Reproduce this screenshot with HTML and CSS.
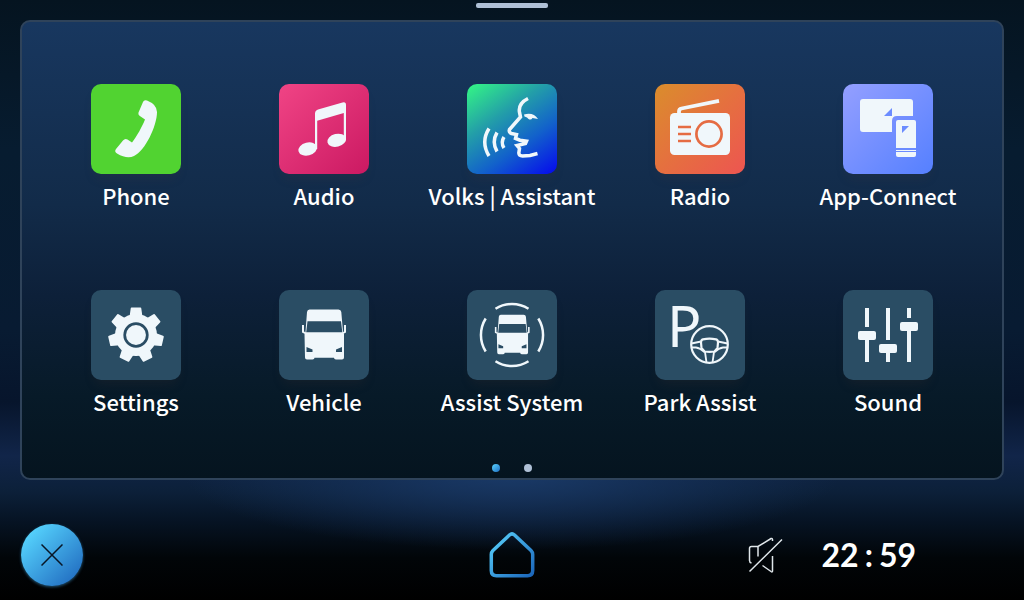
FILE: index.html
```html
<!DOCTYPE html>
<html lang="en">
<head>
    <meta charset="UTF-8">
    <meta name="viewport" content="width=device-width, initial-scale=1.0">
    <title>Home</title>
    <link rel="stylesheet" href="styles.css">
</head>
<body>
    <header class="topbar">
        <div class="handle"></div>
    </header>

    <main class="panel">
        <div class="apps">
            <button class="app" type="button">
                <svg class="tile tile-phone" viewBox="0 0 90 90" aria-hidden="true">
                    <path d="M52 18Q53 15.500 56 16.500Q66 20.500 66 28C66 42 54 67 43 72Q36 75.500 26 69.500Q23 67.500 25 65L32 56.500Q34 54 36.500 55.500L41 58.500C46 52 51 43 54 35.500L48.500 31.800Q46.800 30.500 47.500 28.500Z"/>
                </svg>
                <span class="label">Phone</span>
            </button>

            <button class="app" type="button">
                <svg class="tile tile-audio" viewBox="0 0 90 90" aria-hidden="true">
                    <path d="M36 65V29.500Q36 26.500 39 25.500L63.500 18.500Q67 17.500 67 21V56H64.800V29L38.200 36.800V65Z"/>
                    <ellipse cx="28.700" cy="65" rx="9.500" ry="6.500" transform="rotate(-14 28.700 65)"/>
                    <ellipse cx="57.700" cy="56.300" rx="9.500" ry="6.400" transform="rotate(-14 57.700 56.300)"/>
                </svg>
                <span class="label">Audio</span>
            </button>

            <button class="app" type="button">
                <svg class="tile tile-voice" viewBox="0 0 90 90" aria-hidden="true">
                    <g class="line" stroke-width="3.500">
                        <path d="M61 14.500C54 18 51.500 23 52.500 28.500L53.500 33L42.500 45.500Q41.500 48.500 44.500 49.500L49.500 50.500L48.500 54.500L53 56.200L59.500 57.200L58.500 59.500L50 61.500L52.500 64.500L51.800 69Q52 72 55.500 72L63 71.500L70.500 69.500"/>
                        <path d="M22 44.500Q13.500 58 22 72M30 48.500Q24.500 58 30 67.500M37 53Q33.500 58.500 37 64"/>
                    </g>
                    <path d="M57 30.500Q66.500 28 71 35L65.500 34Q64 36.500 61.500 35Q60.500 33 57.500 32.500Z"/>
                </svg>
                <span class="label">Volks | Assistant</span>
            </button>

            <button class="app" type="button">
                <svg class="tile tile-radio" viewBox="0 0 90 90" aria-hidden="true">
                    <rect x="15" y="29" width="60" height="42" rx="4.500"/>
                    <path class="line" stroke-width="3.800" d="M24 30V27.500Q24 25 26.500 24.500L64 16.800"/>
                    <g class="radio-detail">
                        <circle cx="54" cy="50" r="12.600"/>
                        <path d="M23 43H36M23 50H36M23 57H36"/>
                    </g>
                </svg>
                <span class="label">Radio</span>
            </button>

            <button class="app" type="button">
                <svg class="tile tile-connect" viewBox="0 0 90 90" aria-hidden="true">
                    <path d="M20 15H67Q70 15 70 18V32H54Q49 32 49 37V48H20Q17 48 17 45V18Q17 15 20 15Z"/>
                    <rect x="53" y="36" width="20" height="37" rx="2"/>
                    <path class="connect-detail" d="M41 32L49 24V32ZM59 42H66L59 49ZM53 64H73V66H53ZM53 67H73V68H53Z"/>
                </svg>
                <span class="label">App-Connect</span>
            </button>

            <button class="app" type="button">
                <svg class="tile" viewBox="0 0 90 90" aria-hidden="true">
                    <defs>
                        <path id="tooth" d="M40.500 17.500H49.500Q50.200 17.500 50.300 18.500L51.500 27H38.500L39.700 18.500Q39.800 17.500 40.500 17.500Z"/>
                    </defs>
                    <circle cx="45" cy="45" r="21"/>
                    <use href="#tooth"/>
                    <use href="#tooth" transform="rotate(51.430 45 45)"/>
                    <use href="#tooth" transform="rotate(102.860 45 45)"/>
                    <use href="#tooth" transform="rotate(154.290 45 45)"/>
                    <use href="#tooth" transform="rotate(205.710 45 45)"/>
                    <use href="#tooth" transform="rotate(257.140 45 45)"/>
                    <use href="#tooth" transform="rotate(308.570 45 45)"/>
                    <circle class="gear-ring" cx="45" cy="45" r="11.300"/>
                </svg>
                <span class="label">Settings</span>
            </button>

            <button class="app" type="button">
                <svg class="tile" viewBox="0 0 90 90" aria-hidden="true">
                    <defs>
                        <g id="van">
                            <path d="M30.500 19.500H59.500Q62 19.500 62.300 22L64 42L65 44V67.500Q65 69.500 63 69.500H57Q55 69.500 55 67.800H35.500Q35.500 69.500 33.500 69.500H28Q26 69.500 26 67.500L25.500 44L26.500 42L28 22Q28.300 19.500 30.500 19.500Z"/>
                            <path d="M23 35H25V41.500L27 42.500L26 44L23 42.500ZM67 35H65V41.500L63 42.500L64 44L67 42.500Z"/>
                            <path class="cut" d="M28.500 31.300H62L63.300 42.200H27.200ZM27.500 57L33.500 59.500V62H27.500ZM63 57L57 59.500V62H63Z"/>
                        </g>
                    </defs>
                    <use href="#van"/>
                </svg>
                <span class="label">Vehicle</span>
            </button>

            <button class="app" type="button">
                <svg class="tile" viewBox="0 0 90 90" aria-hidden="true">
                    <use href="#van" transform="translate(9.700 9.300) scale(.79)"/>
                    <path class="line" stroke-width="2.500" d="M28.500 18.700A31 31 0 0 1 61.500 18.700M28.500 71.300A31 31 0 0 0 61.500 71.300M18.700 28.500A31 31 0 0 0 18.700 61.500M71.300 28.500A31 31 0 0 1 71.300 61.500"/>
                </svg>
                <span class="label">Assist System</span>
            </button>

            <button class="app" type="button">
                <svg class="tile" viewBox="0 0 90 90" aria-hidden="true">
                    <g class="line" stroke-width="2.200">
                        <circle cx="54.500" cy="54.500" r="18.300"/>
                        <path d="M48 49.300Q54.500 48 61 49.300Q63 50 63 52.500L62.500 58L59.500 61.500Q54.500 62.300 49.500 61.500L46.500 58L46 52.500Q46 50 48 49.300Z"/>
                        <path d="M36.500 53.500L46 51.500M37 57.500H41Q45 58 49.500 62M72.500 53.500L63 51.500M72 57.500H68Q64 58 59.500 62M50 62L51.500 72.500M59 62L57.500 72.500" stroke-width="1.800"/>
                    </g>
                    <text class="park-letter" x="12" y="57">P</text>
                </svg>
                <span class="label">Park Assist</span>
            </button>

            <button class="app" type="button">
                <svg class="tile" viewBox="0 0 90 90" aria-hidden="true">
                    <path class="line" stroke-width="4" d="M24 18V37M24 49V72M45 18V50M45 62V72M66 18V28M66 40V72"/>
                    <rect x="15" y="41" width="18" height="9" rx="2"/>
                    <rect x="36" y="54" width="18" height="9" rx="2"/>
                    <rect x="57" y="32" width="18" height="9" rx="2"/>
                </svg>
                <span class="label">Sound</span>
            </button>
        </div>

        <nav class="dots" aria-label="Pages">
            <button class="dot active" type="button" aria-label="Page 1"></button>
            <button class="dot" type="button" aria-label="Page 2"></button>
        </nav>
    </main>

    <footer class="bottombar">
        <button class="close" type="button" aria-label="Close">
            <svg width="22" height="22" viewBox="0 0 22 22" aria-hidden="true">
                <path d="M.5 .5L21.500 21.500M21.500 .5L.5 21.500"/>
            </svg>
        </button>

        <button class="home" type="button" aria-label="Home">
            <svg width="48" height="48" viewBox="0 0 48 48" aria-hidden="true">
                <defs>
                    <linearGradient id="homeGradient" x1="0" y1="0" x2="1" y2="1">
                        <stop offset="0" stop-color="#5ad4ff"/>
                        <stop offset="1" stop-color="#1b66ba"/>
                    </linearGradient>
                </defs>
                <path d="M21.500 4Q24 1.800 26.500 4L43 19.500Q44.700 21.200 44.700 23.500V39.500Q44.700 44.700 39.500 44.700H8.500Q3.300 44.700 3.300 39.500V23.500Q3.300 21.200 5 19.500Z"/>
            </svg>
        </button>

        <div class="status">
            <svg class="mute" width="36" height="36" viewBox="0 0 36 36" role="img" aria-label="Muted">
                <path d="M3.500 26Q1.500 25.500 1.500 23.500V11.500Q1.500 9.500 3.500 9.500H10L23 1.500Q24.500 1 24.500 2.500V4M10 9.500V19.500M24.500 19V34Q24.500 35.500 23 34.500L14.500 28.500M1.500 34.500L34 2.500"/>
            </svg>
            <time class="clock" datetime="22:59"><span>22</span><span>:</span><span>59</span></time>
        </div>
    </footer>
</body>
</html>
```
FILE: styles.css
```css
* {
    margin: 0;
    padding: 0;
    box-sizing: border-box;
}

body {
    min-height: 100vh;
    display: flex;
    flex-direction: column;
    font-family: "Noto Sans CJK SC", "Noto Sans", sans-serif;
    color: white;
    background:
        radial-gradient(ellipse 32% 76px at 50% 79%, #1a3a68 0%, rgba(24, 54, 98, 0.6) 45%, transparent 100%),
        linear-gradient(to bottom, #051420 0%, #071c30 25%, #081b32 55%, #07152c 67%, #112549 76%, #0c2039 82%, #061323 87%, #010508 93%, #000 100%);
}

button {
    border: none;
    background: none;
    color: inherit;
    font-family: inherit;
    cursor: pointer;
}

svg {
    display: block;
}

.topbar {
    height: 20px;
    display: flex;
    justify-content: center;
    padding-top: 3px;
}

.handle {
    width: 72px;
    height: 5px;
    border-radius: 2px;
    background: #afc0d6;
}

.panel {
    flex: 1;
    display: flex;
    flex-direction: column;
    margin: 0 20px;
    padding: 62px 20px 6px;
    border: 2px solid #2f435a;
    border-radius: 10px;
    background: linear-gradient(to bottom, #18375f 0%, #122b49 40%, #0d2039 60%, #071a28 82%, #05141f 100%);
}

.apps {
    display: grid;
    grid-template-columns: repeat(5, 1fr);
    row-gap: 82px;
}

.app {
    display: flex;
    flex-direction: column;
    align-items: center;
    gap: 8px;
}

.tile {
    width: 90px;
    height: 90px;
    overflow: visible;
    border-radius: 10px;
    background: #2a4d64;
    fill: #f0f7fb;
    box-shadow: 0 8px 12px -4px rgba(90, 60, 50, 0.15);
}

.tile-phone {
    background: #51d331;
}

.tile-audio {
    background: linear-gradient(135deg, #f04485, #cb1962);
}

.tile-voice {
    background: linear-gradient(145deg, #34f884 0%, #239fa8 35%, #1261cb 65%, #0508ee 100%);
}

.tile-radio {
    background: linear-gradient(135deg, #da8d2c, #e5703f 50%, #ed5551);
}

.tile-connect {
    background: linear-gradient(135deg, #949fff, #5580ff);
}

.line {
    fill: none;
    stroke: #f0f7fb;
}

.radio-detail {
    fill: none;
    stroke: #e56c43;
    stroke-width: 2.7;
}

.connect-detail {
    fill: #6b8cff;
}

.gear-ring {
    fill: none;
    stroke: #2a4d64;
    stroke-width: 2.7;
}

.cut {
    fill: #2a4d64;
}

.park-letter {
    font-family: "Noto Sans", sans-serif;
    font-size: 57px;
    font-weight: 400;
}

.label {
    font-size: 22px;
    font-weight: 500;
    line-height: 26px;
    white-space: nowrap;
}

.dots {
    display: flex;
    justify-content: center;
    gap: 24px;
    margin-top: auto;
}

.dot {
    width: 8px;
    height: 8px;
    border-radius: 50%;
    background: #afc0d6;
}

.dot.active {
    background: linear-gradient(135deg, #5ad4ff, #1f6fc4);
}

.bottombar {
    display: grid;
    grid-template-columns: 1fr auto 1fr;
    align-items: center;
    padding: 44px 21px 14px;
}

.close {
    width: 62px;
    height: 62px;
    display: flex;
    align-items: center;
    justify-content: center;
    border-radius: 50%;
    background: linear-gradient(135deg, #57d6ff 10%, #1f68be 95%);
    box-shadow: 0 1px 3px rgba(70, 170, 230, 0.5);
}

.close path {
    fill: none;
    stroke: #081626;
    stroke-width: 1.5;
}

.home path {
    fill: none;
    stroke: url(#homeGradient);
    stroke-width: 3.5;
}

.status {
    display: flex;
    align-items: center;
    justify-content: flex-end;
    gap: 38px;
    padding-right: 87px;
}

.mute {
    fill: none;
    stroke: #dfe6ea;
    stroke-width: 1.5;
}

.clock {
    display: flex;
    gap: 6px;
    font-family: Lato, sans-serif;
    font-size: 32px;
    font-weight: 700;
    line-height: 40px;
}
```
